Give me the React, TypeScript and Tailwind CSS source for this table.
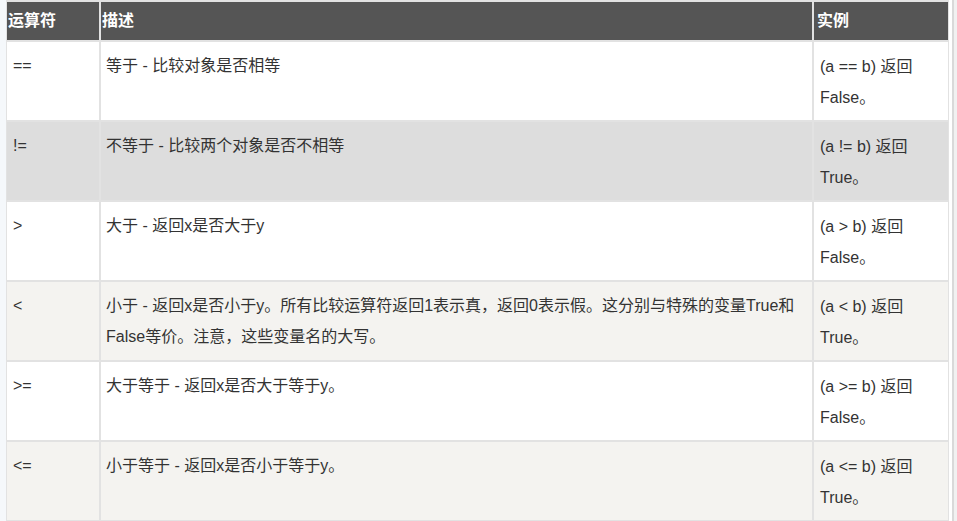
const rows = [
  { op: '==', desc: ['等于 - 比较对象是否相等'], ex: ['(a == b) 返回', 'False。'], bg: 'bg-white' },
  { op: '!=', desc: ['不等于 - 比较两个对象是否不相等'], ex: ['(a != b) 返回', 'True。'], bg: 'bg-[#dddddd]' },
  { op: '>', desc: ['大于 - 返回x是否大于y'], ex: ['(a > b) 返回', 'False。'], bg: 'bg-white' },
  {
    op: '<',
    desc: ['小于 - 返回x是否小于y。所有比较运算符返回1表示真，返回0表示假。这分别与特殊的变量True和', 'False等价。注意，这些变量名的大写。'],
    ex: ['(a < b) 返回', 'True。'],
    bg: 'bg-[#f4f3f0]',
  },
  { op: '>=', desc: ['大于等于 - 返回x是否大于等于y。'], ex: ['(a >= b) 返回', 'False。'], bg: 'bg-white' },
  { op: '<=', desc: ['小于等于 - 返回x是否小于等于y。'], ex: ['(a <= b) 返回', 'True。'], bg: 'bg-[#f4f3f0]' },
];

const App = () => {
  return (
    <div
      className="flex h-[521px] w-[957px] overflow-hidden bg-[#f5f8fb] text-[16px] text-[#333]"
      style={{ fontFamily: '"Liberation Sans", "Noto Sans CJK SC", sans-serif' }}
    >
      {/* tabla */}
      <div className="ml-[6px] w-[943px] shrink-0 border-l border-t-2 border-[#e2e2e2]">
        <div className="grid h-[40px] grid-cols-[94px_713px_136px] border-b-2 border-[#e2e2e2] bg-[#555555] font-bold text-white">
          <div className="flex items-center border-r-2 border-[#e2e2e2] pl-[1px]">运算符</div>
          <div className="flex items-center border-r-2 border-[#e2e2e2] pl-[1px]">描述</div>
          <div className="flex items-center border-r-2 border-[#e2e2e2] pl-[3px]">实例</div>
        </div>
        {rows.map((r) => (
          <div key={r.op} className={`grid h-[80px] grid-cols-[94px_713px_136px] border-b-2 border-[#e2e2e2] ${r.bg}`}>
            <div className="border-r-2 border-[#e2e2e2] pl-[6px] pt-[8px] leading-[31px]">{r.op}</div>
            <div className="border-r-2 border-[#e2e2e2] pl-[5px] pt-[8px] leading-[31px]">
              {r.desc.map((l) => (
                <div key={l} className="whitespace-nowrap">{l}</div>
              ))}
            </div>
            <div className="border-r-2 border-[#e2e2e2] pl-[6px] pt-[9px] leading-[31px]">
              {r.ex.map((l) => (
                <div key={l} className="whitespace-nowrap">{l}</div>
              ))}
            </div>
          </div>
        ))}
      </div>
      {/* barra lateral */}
      <div className="w-[3px] shrink-0 bg-white" />
      <div className="w-[2px] shrink-0 bg-[#d9d9d9]" />
      <div className="flex-1 bg-[#f1f1f1]" />
    </div>
  );
};

export default App;
